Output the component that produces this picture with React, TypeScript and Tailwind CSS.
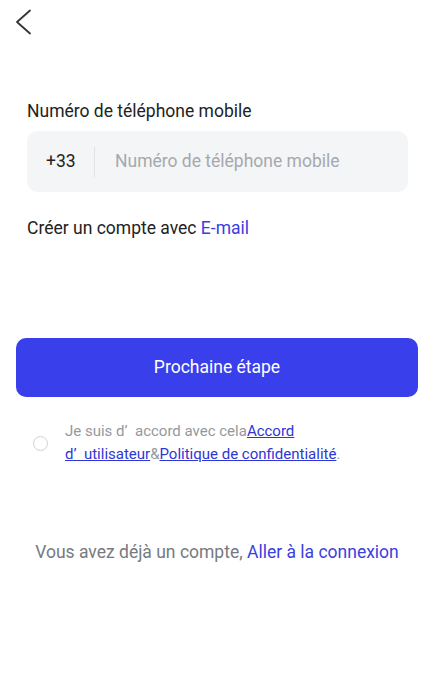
export default function App() {
  return (
    <div className="min-h-[681px] w-full bg-white font-[Roboto] text-[#222]">
      <div className="px-[15px] pt-[9px]">
        <svg width="18" height="26" viewBox="0 0 18 26" fill="none" stroke="#333" strokeWidth="1.8" strokeLinecap="round" strokeLinejoin="round">
          <polyline points="15,1.5 2,13 15,24.5" />
        </svg>
      </div>

      <main className="px-[27px] pt-[65px]">
        <label className="block text-[17.5px] leading-[22px] text-[#222]">Numéro de téléphone mobile</label>

        <div className="mt-[9px] -mr-[1px] flex h-[61px] items-center rounded-[11px] bg-[#f4f5f7]">
          <span className="w-[67px] pl-[19px] text-[17.5px] text-[#222]">+33</span>
          <div className="h-[30px] w-px bg-[#e2e3e6]" />
          <input
            className="ml-[20px] flex-1 bg-transparent text-[17.5px] outline-none placeholder:text-[#a6a8ad]"
            placeholder="Numéro de téléphone mobile"
          />
        </div>

        <p className="mt-[25px] text-[17.5px] leading-[22px]">
          Créer un compte avec <span className="text-[#3a40e0]">E-mail</span>
        </p>
      </main>

      <div className="px-[16px] pt-[99px]">
        <button className="flex h-[59px] w-full items-center justify-center rounded-[10px] bg-[#3a3fec] text-[17.5px] text-white">
          Prochaine étape
        </button>

        <div className="mt-[23px] flex items-center gap-[17px] pl-[17px]">
          <span className="h-[15px] w-[15px] shrink-0 rounded-full border border-[#d0d1d4]" />
          <p className="text-[15px] leading-[23px] text-[#96989c]">
            Je suis d’&nbsp;&nbsp;accord avec cela<a className="text-[#2f36d6] underline">Accord</a>
            <br />
            <a className="text-[#2f36d6] underline">d’&nbsp;&nbsp;utilisateur</a>&amp;<a className="text-[#2f36d6] underline">Politique de confidentialité</a>.
          </p>
        </div>
      </div>

      <p className="pt-[73px] text-center text-[17.5px] text-[#777a80]">
        Vous avez déjà un compte, <span className="text-[#3a40e0]">Aller à la connexion</span>
      </p>
    </div>
  )
}
